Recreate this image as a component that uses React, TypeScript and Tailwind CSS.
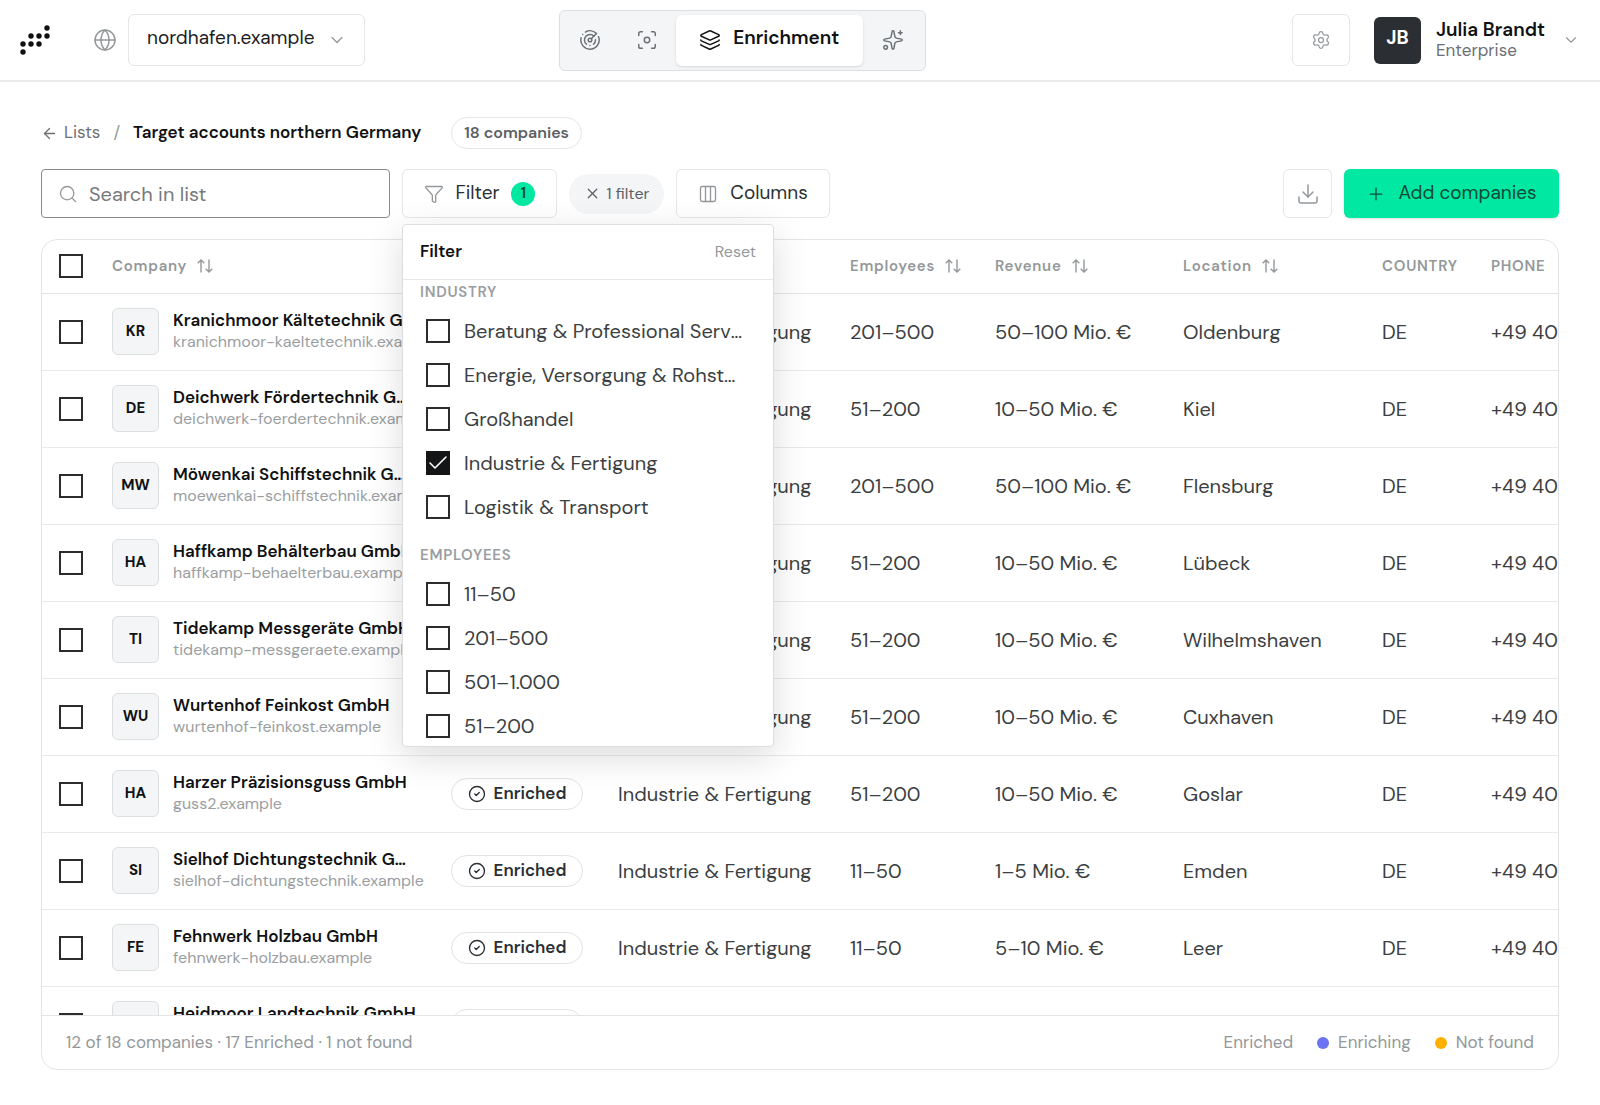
import React, { useState } from "react"
import {
  ArrowLeft,
  Check,
  ChevronDown,
  CircleCheck,
  Columns3,
  Download,
  Focus,
  Funnel,
  Globe,
  Layers,
  Plus,
  Radar,
  Search,
  Settings,
  Sparkles,
  X,
} from "lucide-react"

type Company = {
  initials: string
  name: string
  domain: string
  employees: string
  revenue: string
  location: string
}

const companies: Company[] = [
  { initials: "KR", name: "Kranichmoor Kältetechnik GmbH", domain: "kranichmoor-kaeltetechnik.example", employees: "201–500", revenue: "50–100 Mio. €", location: "Oldenburg" },
  { initials: "DE", name: "Deichwerk Fördertechnik GmbH", domain: "deichwerk-foerdertechnik.example", employees: "51–200", revenue: "10–50 Mio. €", location: "Kiel" },
  { initials: "MW", name: "Möwenkai Schiffstechnik GmbH", domain: "moewenkai-schiffstechnik.example", employees: "201–500", revenue: "50–100 Mio. €", location: "Flensburg" },
  { initials: "HA", name: "Haffkamp Behälterbau GmbH", domain: "haffkamp-behaelterbau.example", employees: "51–200", revenue: "10–50 Mio. €", location: "Lübeck" },
  { initials: "TI", name: "Tidekamp Messgeräte GmbH", domain: "tidekamp-messgeraete.example", employees: "51–200", revenue: "10–50 Mio. €", location: "Wilhelmshaven" },
  { initials: "WU", name: "Wurtenhof Feinkost GmbH", domain: "wurtenhof-feinkost.example", employees: "51–200", revenue: "10–50 Mio. €", location: "Cuxhaven" },
  { initials: "HA", name: "Harzer Präzisionsguss GmbH", domain: "guss2.example", employees: "51–200", revenue: "10–50 Mio. €", location: "Goslar" },
  { initials: "SI", name: "Sielhof Dichtungstechnik GmbH", domain: "sielhof-dichtungstechnik.example", employees: "11–50", revenue: "1–5 Mio. €", location: "Emden" },
  { initials: "FE", name: "Fehnwerk Holzbau GmbH", domain: "fehnwerk-holzbau.example", employees: "11–50", revenue: "5–10 Mio. €", location: "Leer" },
  { initials: "HE", name: "Heidmoor Landtechnik GmbH", domain: "heidmoor-landtechnik.example", employees: "51–200", revenue: "10–50 Mio. €", location: "Celle" },
]

const industries = [
  "Beratung & Professional Services",
  "Energie, Versorgung & Rohstoffe",
  "Großhandel",
  "Industrie & Fertigung",
  "Logistik & Transport",
]

const sizes = ["11–50", "201–500", "501–1.000", "51–200"]

function Checkbox({ checked, onChange, label }: { checked?: boolean; onChange?: () => void; label?: string }) {
  return (
    <span className="relative block size-6 shrink-0">
      <input
        type="checkbox"
        aria-label={label}
        defaultChecked={onChange ? undefined : false}
        checked={onChange ? !!checked : undefined}
        onChange={onChange}
        className="peer block size-6 appearance-none border-2 border-[#2b2c2d] bg-white checked:border-[#141516] checked:bg-[#141516]"
      />
      <Check className="pointer-events-none absolute inset-0 hidden size-6 text-white peer-checked:block" strokeWidth={1.6} />
    </span>
  )
}

function SortIcon() {
  return (
    <svg viewBox="0 0 16 14" className="h-[14px] w-4" fill="none" stroke="currentColor" strokeWidth="1.4" aria-hidden="true">
      <path d="M4 13.5V1M.7 4.3 4 1l3.3 3.3M12 .5V13M8.7 9.7 12 13l3.3-3.3" />
    </svg>
  )
}

function Logo() {
  const dots = [
    [27, 3], [11, 11], [19, 11], [27, 11],
    [3, 19], [11, 19], [19, 19], [3, 27],
  ]
  return (
    <svg viewBox="0 0 30 30" className="size-[30px]" aria-hidden="true">
      {dots.map(([cx, cy]) => (
        <circle key={`${cx}-${cy}`} cx={cx} cy={cy} r="2.7" fill="#101112" />
      ))}
    </svg>
  )
}

function Header() {
  return (
    <header className="grid h-[82px] shrink-0 grid-cols-[14fr_auto_17fr] items-center border-b-2 border-[#e9eaeb] px-5">
      <div className="flex items-center">
        <Logo />
        <Globe className="ml-[43px] size-6 text-[#94989b]" strokeWidth={1.5} />
        <div className="relative ml-[11px]">
          <select
            aria-label="Domain"
            className="h-[52px] w-[237px] appearance-none rounded-md border border-[#e4e6e7] bg-white pb-1 pl-[18px] text-[19px] text-[#1c1d1f]"
          >
            <option>nordhafen.example</option>
          </select>
          <ChevronDown className="pointer-events-none absolute top-4 right-[18px] size-5 text-[#94989b]" strokeWidth={1.5} />
        </div>
      </div>

      <nav className="flex h-[61px] items-center rounded-md border border-[#dcdfe0] bg-[#f3f5f6] px-[2px] text-[#6c7074]">
        <button aria-label="Radar" className="flex w-[57px] justify-center">
          <Radar className="size-[22px]" strokeWidth={1.6} />
        </button>
        <button aria-label="Scan" className="flex w-[57px] justify-center">
          <Focus className="size-[22px]" strokeWidth={1.6} />
        </button>
        <button className="flex h-[51px] w-[187px] items-center justify-center gap-3 rounded-md bg-white text-[19px] font-semibold text-[#101112] shadow-sm">
          <Layers className="size-[22px]" strokeWidth={1.6} />
          <span className="pb-1">Enrichment</span>
        </button>
        <button aria-label="Assistant" className="flex w-[60px] justify-center">
          <Sparkles className="size-[22px]" strokeWidth={1.6} />
        </button>
      </nav>

      <div className="flex items-center justify-end">
        <button aria-label="Settings" className="flex h-[52px] w-[58px] items-center justify-center rounded-md border border-[#e4e6e7]">
          <Settings className="size-5 text-[#94989b]" strokeWidth={1.5} />
        </button>
        <button className="ml-6 flex items-center text-left">
          <span className="flex size-[47px] items-center justify-center rounded-md bg-[#2b2f33] pb-1 text-[19px] font-bold text-white">JB</span>
          <span className="ml-[15px] flex flex-col leading-[21px]">
            <span className="text-[19px] font-semibold text-[#101112]">Julia Brandt</span>
            <span className="text-[17px] text-[#6c7074]">Enterprise</span>
          </span>
          <ChevronDown className="ml-[17px] size-[18px] text-[#94989b]" strokeWidth={1.5} />
        </button>
      </div>
    </header>
  )
}

function FilterMenu({ selected, onToggle }: { selected: string[]; onToggle: (v: string) => void }) {
  const groups = [
    { title: "Industry", options: industries },
    { title: "Employees", options: sizes },
  ]
  return (
    <div className="absolute top-[55px] left-0 z-20 h-[523px] w-[372px] overflow-hidden rounded-sm border border-[#dcdfe0] bg-white shadow-[0_10px_36px_rgba(0,0,0,0.14)]">
      <div className="flex h-[55px] items-center justify-between border-b border-[#e4e6e7] px-[17px]">
        <span className="text-[17px] font-semibold text-[#101112]">Filter</span>
        <button className="text-[16px] text-[#94989b]">Reset</button>
      </div>
      {groups.map((group) => (
        <fieldset key={group.title} className="mb-[14px] px-[17px]">
          <legend className="pt-[2px] text-[15px] leading-5 font-semibold tracking-wider text-[#9a9ea1] uppercase">{group.title}</legend>
          <div className="pt-[7px]">
            {group.options.map((option) => (
              <label key={option} className="flex h-11 items-center gap-[14px] pl-[6px] text-[20px] text-[#3c3f42]">
                <Checkbox checked={selected.includes(option)} onChange={() => onToggle(option)} />
                <span className="w-[280px] truncate">{option}</span>
              </label>
            ))}
          </div>
        </fieldset>
      ))}
    </div>
  )
}

function SortHeader({ children }: { children: React.ReactNode }) {
  return (
    <th className="p-0 text-left font-semibold">
      <button className="flex items-center gap-[10px] tracking-wider">
        {children}
        <SortIcon />
      </button>
    </th>
  )
}

function CompanyTable() {
  return (
    <table className="w-[1700px] table-fixed border-collapse">
      <colgroup>
        <col className="w-[70px]" />
        <col className="w-[339px]" />
        <col className="w-[167px]" />
        <col className="w-[232px]" />
        <col className="w-[145px]" />
        <col className="w-[188px]" />
        <col className="w-[199px]" />
        <col className="w-[109px]" />
        <col />
      </colgroup>
      <thead>
        <tr className="h-[53px] border-b border-[#e2e4e5] text-[15px] text-[#94989b]">
          <th className="p-0 pl-[17px]">
            <Checkbox label="Select all companies" />
          </th>
          <SortHeader>Company</SortHeader>
          <SortHeader>Status</SortHeader>
          <SortHeader>Industry</SortHeader>
          <SortHeader>Employees</SortHeader>
          <SortHeader>Revenue</SortHeader>
          <SortHeader>Location</SortHeader>
          <th className="p-0 text-left font-semibold tracking-wider uppercase">Country</th>
          <th className="p-0 text-left font-semibold tracking-wider uppercase">Phone</th>
        </tr>
      </thead>
      <tbody>
        {companies.map((c) => (
          <tr key={c.domain} className="h-[77px] border-b border-[#e8eaeb] text-[20px] text-[#3c3f42]">
            <td className="p-0 pl-[17px]">
              <Checkbox label={`Select ${c.name}`} />
            </td>
            <td className="p-0">
              <div className="flex items-center gap-[14px]">
                <span className="flex size-[47px] shrink-0 items-center justify-center rounded-md border border-[#dcdfe0] bg-[#f3f5f6] text-[15px] font-bold text-[#101112]">
                  {c.initials}
                </span>
                <div className="flex w-[252px] flex-col pb-[2px] leading-[21px]">
                  <span className="max-w-[246px] truncate text-[17px] font-semibold text-[#101112]">{c.name}</span>
                  <span className="truncate text-[16px] text-[#9a9ea1]">{c.domain}</span>
                </div>
              </div>
            </td>
            <td className="p-0">
              <span className="flex h-8 w-[132px] items-center justify-center gap-2 rounded-full border border-[#e1e3e4] text-[17px] font-semibold text-[#2b2f33]">
                <CircleCheck className="size-[18px]" strokeWidth={1.8} />
                Enriched
              </span>
            </td>
            <td className="p-0">Industrie &amp; Fertigung</td>
            <td className="p-0">{c.employees}</td>
            <td className="p-0">{c.revenue}</td>
            <td className="p-0">{c.location}</td>
            <td className="p-0">DE</td>
            <td className="p-0">+49 40</td>
          </tr>
        ))}
      </tbody>
    </table>
  )
}

export default function App() {
  const [selected, setSelected] = useState<string[]>(["Industrie & Fertigung"])
  const [open, setOpen] = useState(true)

  const toggle = (value: string) =>
    setSelected((prev) => (prev.includes(value) ? prev.filter((v) => v !== value) : [...prev, value]))

  return (
    <div className="flex h-screen flex-col bg-white font-['DM_Sans',Inter,sans-serif]">
      <Header />

      <main className="flex min-h-0 flex-1 flex-col px-[41px] pt-[35px] pb-[35px]">
        {/* Breadcrumb */}
        <div className="flex h-8 items-center text-[17px]">
          <a href="#lists" className="flex items-center gap-[6px] text-[#6c7074]">
            <ArrowLeft className="size-[17px]" strokeWidth={1.8} />
            Lists
          </a>
          <span className="mx-[13px] text-[#94989b]">/</span>
          <h1 className="font-semibold text-[#101112]">Target accounts northern Germany</h1>
          <span className="ml-[30px] flex h-8 items-center rounded-full border border-[#e4e6e7] px-3 text-[16px] font-semibold text-[#5c6064]">
            18 companies
          </span>
        </div>

        {/* Toolbar */}
        <div className="mt-5 flex h-[49px] items-center gap-3">
          <div className="relative h-full w-[349px]">
            <Search className="absolute top-[15px] left-[17px] size-5 text-[#94989b]" strokeWidth={1.6} />
            <input
              type="text"
              aria-label="Search in list"
              placeholder="Search in list"
              className="h-full w-full rounded-sm border border-[#868a8d] pl-[47px] text-[20px] placeholder:text-[#77797c]"
            />
          </div>
          <div className="relative h-full">
            <button
              onClick={() => setOpen(!open)}
              className="flex h-full w-[155px] items-center justify-center gap-3 rounded-md border border-[#e4e6e7] text-[19px] text-[#2b2f33]"
            >
              <Funnel className="size-5 text-[#94989b]" strokeWidth={1.6} />
              Filter
              <span className="flex size-6 items-center justify-center rounded-full bg-[#00e8a2] text-[15px] font-semibold text-[#0d4a37]">
                {selected.length}
              </span>
            </button>
            {open && <FilterMenu selected={selected} onToggle={toggle} />}
          </div>
          <button className="flex h-10 w-[95px] items-center justify-center gap-[6px] rounded-full bg-[#f3f5f6] text-[16px] text-[#5c6064]">
            <X className="size-[17px]" strokeWidth={1.7} />1 filter
          </button>
          <button className="flex h-full w-[154px] items-center justify-center gap-3 rounded-md border border-[#e4e6e7] text-[19px] text-[#2b2f33]">
            <Columns3 className="size-5 text-[#94989b]" strokeWidth={1.6} />
            Columns
          </button>
          <button aria-label="Download" className="ml-auto flex h-full w-[49px] items-center justify-center rounded-md border border-[#e4e6e7]">
            <Download className="size-6 text-[#94989b]" strokeWidth={1.5} />
          </button>
          <button className="flex h-full w-[215px] items-center justify-center gap-3 rounded-md bg-[#00e8a2] text-[19px] text-[#0d4a37] shadow-sm">
            <Plus className="size-5" strokeWidth={1.5} />
            Add companies
          </button>
        </div>

        {/* Table card */}
        <section className="mt-[21px] flex min-h-0 flex-1 flex-col overflow-hidden rounded-2xl border border-[#e2e4e5]">
          <div className="min-h-0 flex-1 overflow-hidden">
            <CompanyTable />
          </div>
          <footer className="flex h-[54px] shrink-0 items-center justify-between border-t border-[#e2e4e5] px-6 text-[17px] text-[#94989b]">
            <span>12 of 18 companies · 17 Enriched · 1 not found</span>
            <div className="flex items-center gap-6">
              <span>Enriched</span>
              <span className="flex items-center gap-[9px]">
                <span className="size-3 rounded-full bg-[#6b74f2]" />
                Enriching
              </span>
              <span className="flex items-center gap-[9px]">
                <span className="size-3 rounded-full bg-[#ffb000]" />
                Not found
              </span>
            </div>
          </footer>
        </section>
      </main>
    </div>
  )
}
